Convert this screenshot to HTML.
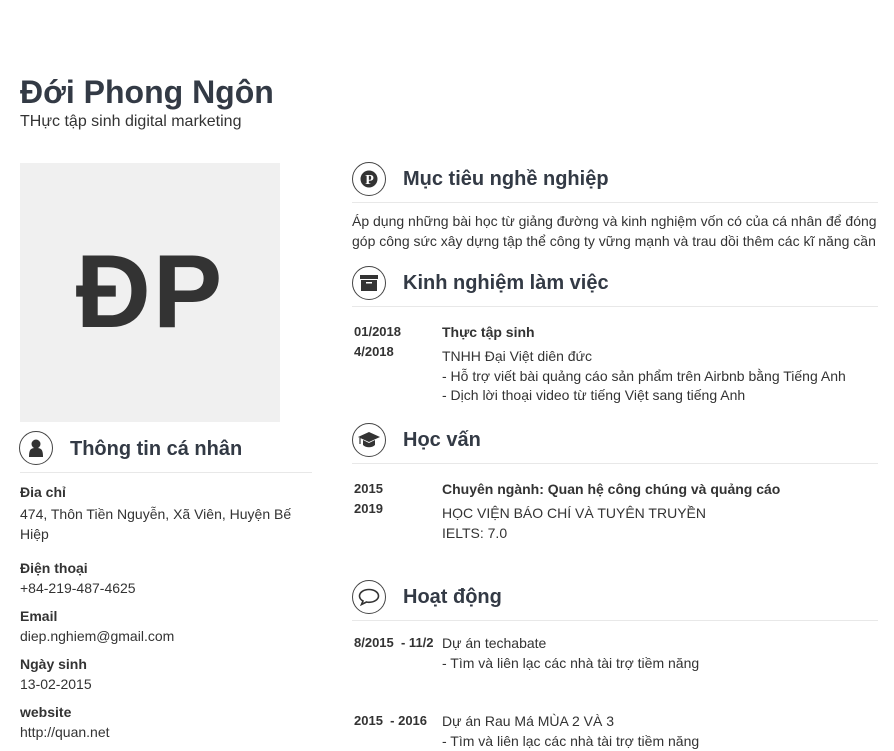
<!DOCTYPE html>
<html><head><meta charset="utf-8"><style>
*{margin:0;padding:0;box-sizing:border-box}
body{width:894px;height:750px;overflow:hidden;background:#fff;font-family:"Liberation Sans",Arial,sans-serif;color:#333;position:relative}
.a{position:absolute;white-space:nowrap;line-height:20px;font-size:14px}
.b{font-weight:bold}
.h{font-size:20px;font-weight:bold;color:#333a45;line-height:26px}
.ic{position:absolute;width:34px;height:34px;border:1.5px solid #444;border-radius:50%;display:flex;align-items:center;justify-content:center}
.ln{position:absolute;height:1px;background:#e8e8e8}
</style></head><body>
<div class="a b" style="left:20px;top:74px;font-size:32px;line-height:36px;color:#333a45">Đới Phong Ngôn</div>
<div class="a" style="left:20px;top:112px;font-size:16px">THực tập sinh digital marketing</div>
<div style="position:absolute;left:20px;top:163px;width:260px;height:259px;background:#f0f0f0;display:flex;align-items:center;justify-content:center;font-weight:bold;font-size:104px;color:#333;letter-spacing:2px">ĐP</div>

<div class="ic" style="left:19px;top:431px"><svg width="16" height="18" viewBox="0 0 16 18"><circle cx="8" cy="5" r="4.5" fill="#333"/><path d="M1 18 C1 10 3 9 8 9 C13 9 15 10 15 18Z" fill="#333"/></svg></div>
<div class="a h" style="left:70px;top:436px">Thông tin cá nhân</div>
<div class="ln" style="left:20px;top:472px;width:292px"></div>
<div class="a b" style="left:20px;top:482px">Đia chỉ</div>
<div class="a" style="left:20px;top:504px">474, Thôn Tiền Nguyễn, Xã Viên, Huyện Bế</div>
<div class="a" style="left:20px;top:524px">Hiệp</div>
<div class="a b" style="left:20px;top:558px">Điện thoại</div>
<div class="a" style="left:20px;top:578px">+84-219-487-4625</div>
<div class="a b" style="left:20px;top:606px">Email</div>
<div class="a" style="left:20px;top:626px">diep.nghiem@gmail.com</div>
<div class="a b" style="left:20px;top:654px">Ngày sinh</div>
<div class="a" style="left:20px;top:674px">13-02-2015</div>
<div class="a b" style="left:20px;top:702px">website</div>
<div class="a" style="left:20px;top:722px">http://quan.net</div>

<div class="ic" style="left:352px;top:162px"><svg width="18" height="18" viewBox="0 0 18 18"><circle cx="9" cy="9" r="8.5" fill="#333"/><text x="9.5" y="14" text-anchor="middle" font-size="14" font-weight="bold" fill="#fff" font-family="Liberation Serif">P</text></svg></div>
<div class="a h" style="left:403px;top:166px">Mục tiêu nghề nghiệp</div>
<div class="ln" style="left:352px;top:202px;width:526px"></div>
<div class="a" style="left:352px;top:211px">Áp dụng những bài học từ giảng đường và kinh nghiệm vốn có của cá nhân để đóng</div>
<div class="a" style="left:352px;top:231px">góp công sức xây dựng tập thể công ty vững mạnh và trau dồi thêm các kĩ năng cần</div>

<div class="ic" style="left:352px;top:266px"><svg width="18" height="16" viewBox="0 0 18 16"><rect x="0" y="0" width="18" height="4" fill="#333"/><rect x="1" y="5" width="16" height="11" fill="#333"/><rect x="6" y="7" width="6" height="1.5" fill="#fff"/></svg></div>
<div class="a h" style="left:403px;top:270px">Kinh nghiệm làm việc</div>
<div class="ln" style="left:352px;top:306px;width:526px"></div>
<div class="a b" style="left:354px;top:322px;font-size:13px">01/2018</div>
<div class="a b" style="left:354px;top:342px;font-size:13px">4/2018</div>
<div class="a b" style="left:442px;top:322px">Thực tập sinh</div>
<div class="a" style="left:442px;top:346px">TNHH Đại Việt diên đức</div>
<div class="a" style="left:442px;top:366px">- Hỗ trợ viết bài quảng cáo sản phẩm trên Airbnb bằng Tiếng Anh</div>
<div class="a" style="left:442px;top:385px">- Dịch lời thoại video từ tiếng Việt sang tiếng Anh</div>

<div class="ic" style="left:352px;top:423px"><svg width="22" height="16" viewBox="0 0 22 16"><path d="M11 0 L22 5 L11 10 L0 5Z" fill="#333"/><path d="M5 8 L5 13 C8 16 14 16 17 13 L17 8 L11 11Z" fill="#333"/><path d="M2 6 L2 12" stroke="#333" stroke-width="1.2"/></svg></div>
<div class="a h" style="left:403px;top:427px">Học vấn</div>
<div class="ln" style="left:352px;top:463px;width:526px"></div>
<div class="a b" style="left:354px;top:479px;font-size:13px">2015</div>
<div class="a b" style="left:354px;top:499px;font-size:13px">2019</div>
<div class="a b" style="left:442px;top:479px">Chuyên ngành: Quan hệ công chúng và quảng cáo</div>
<div class="a" style="left:442px;top:503px">HỌC VIỆN BÁO CHÍ VÀ TUYÊN TRUYỀN</div>
<div class="a" style="left:442px;top:523px">IELTS: 7.0</div>

<div class="ic" style="left:352px;top:580px"><svg width="22" height="18" viewBox="0 0 22 18"><path d="M11 1.5 C5.5 1.5 1.5 4.5 1.5 8 C1.5 10 2.8 11.8 5 13 L3.5 16.5 L8.5 14 C9.3 14.2 10.1 14.3 11 14.3 C16.5 14.3 20.5 11.3 20.5 8 C20.5 4.5 16.5 1.5 11 1.5Z" fill="none" stroke="#333" stroke-width="1.6"/></svg></div>
<div class="a h" style="left:403px;top:584px">Hoạt động</div>
<div class="ln" style="left:352px;top:620px;width:526px"></div>
<div class="a b" style="left:354px;top:633px;font-size:13px;width:80px;overflow:hidden">8/2015&nbsp; - 11/2015</div>
<div class="a" style="left:442px;top:633px">Dự án techabate</div>
<div class="a" style="left:442px;top:653px">- Tìm và liên lạc các nhà tài trợ tiềm năng</div>
<div class="a b" style="left:354px;top:711px;font-size:13px">2015&nbsp; - 2016</div>
<div class="a" style="left:442px;top:711px">Dự án Rau Má MÙA 2 VÀ 3</div>
<div class="a" style="left:442px;top:731px">- Tìm và liên lạc các nhà tài trợ tiềm năng</div>
</body></html>
